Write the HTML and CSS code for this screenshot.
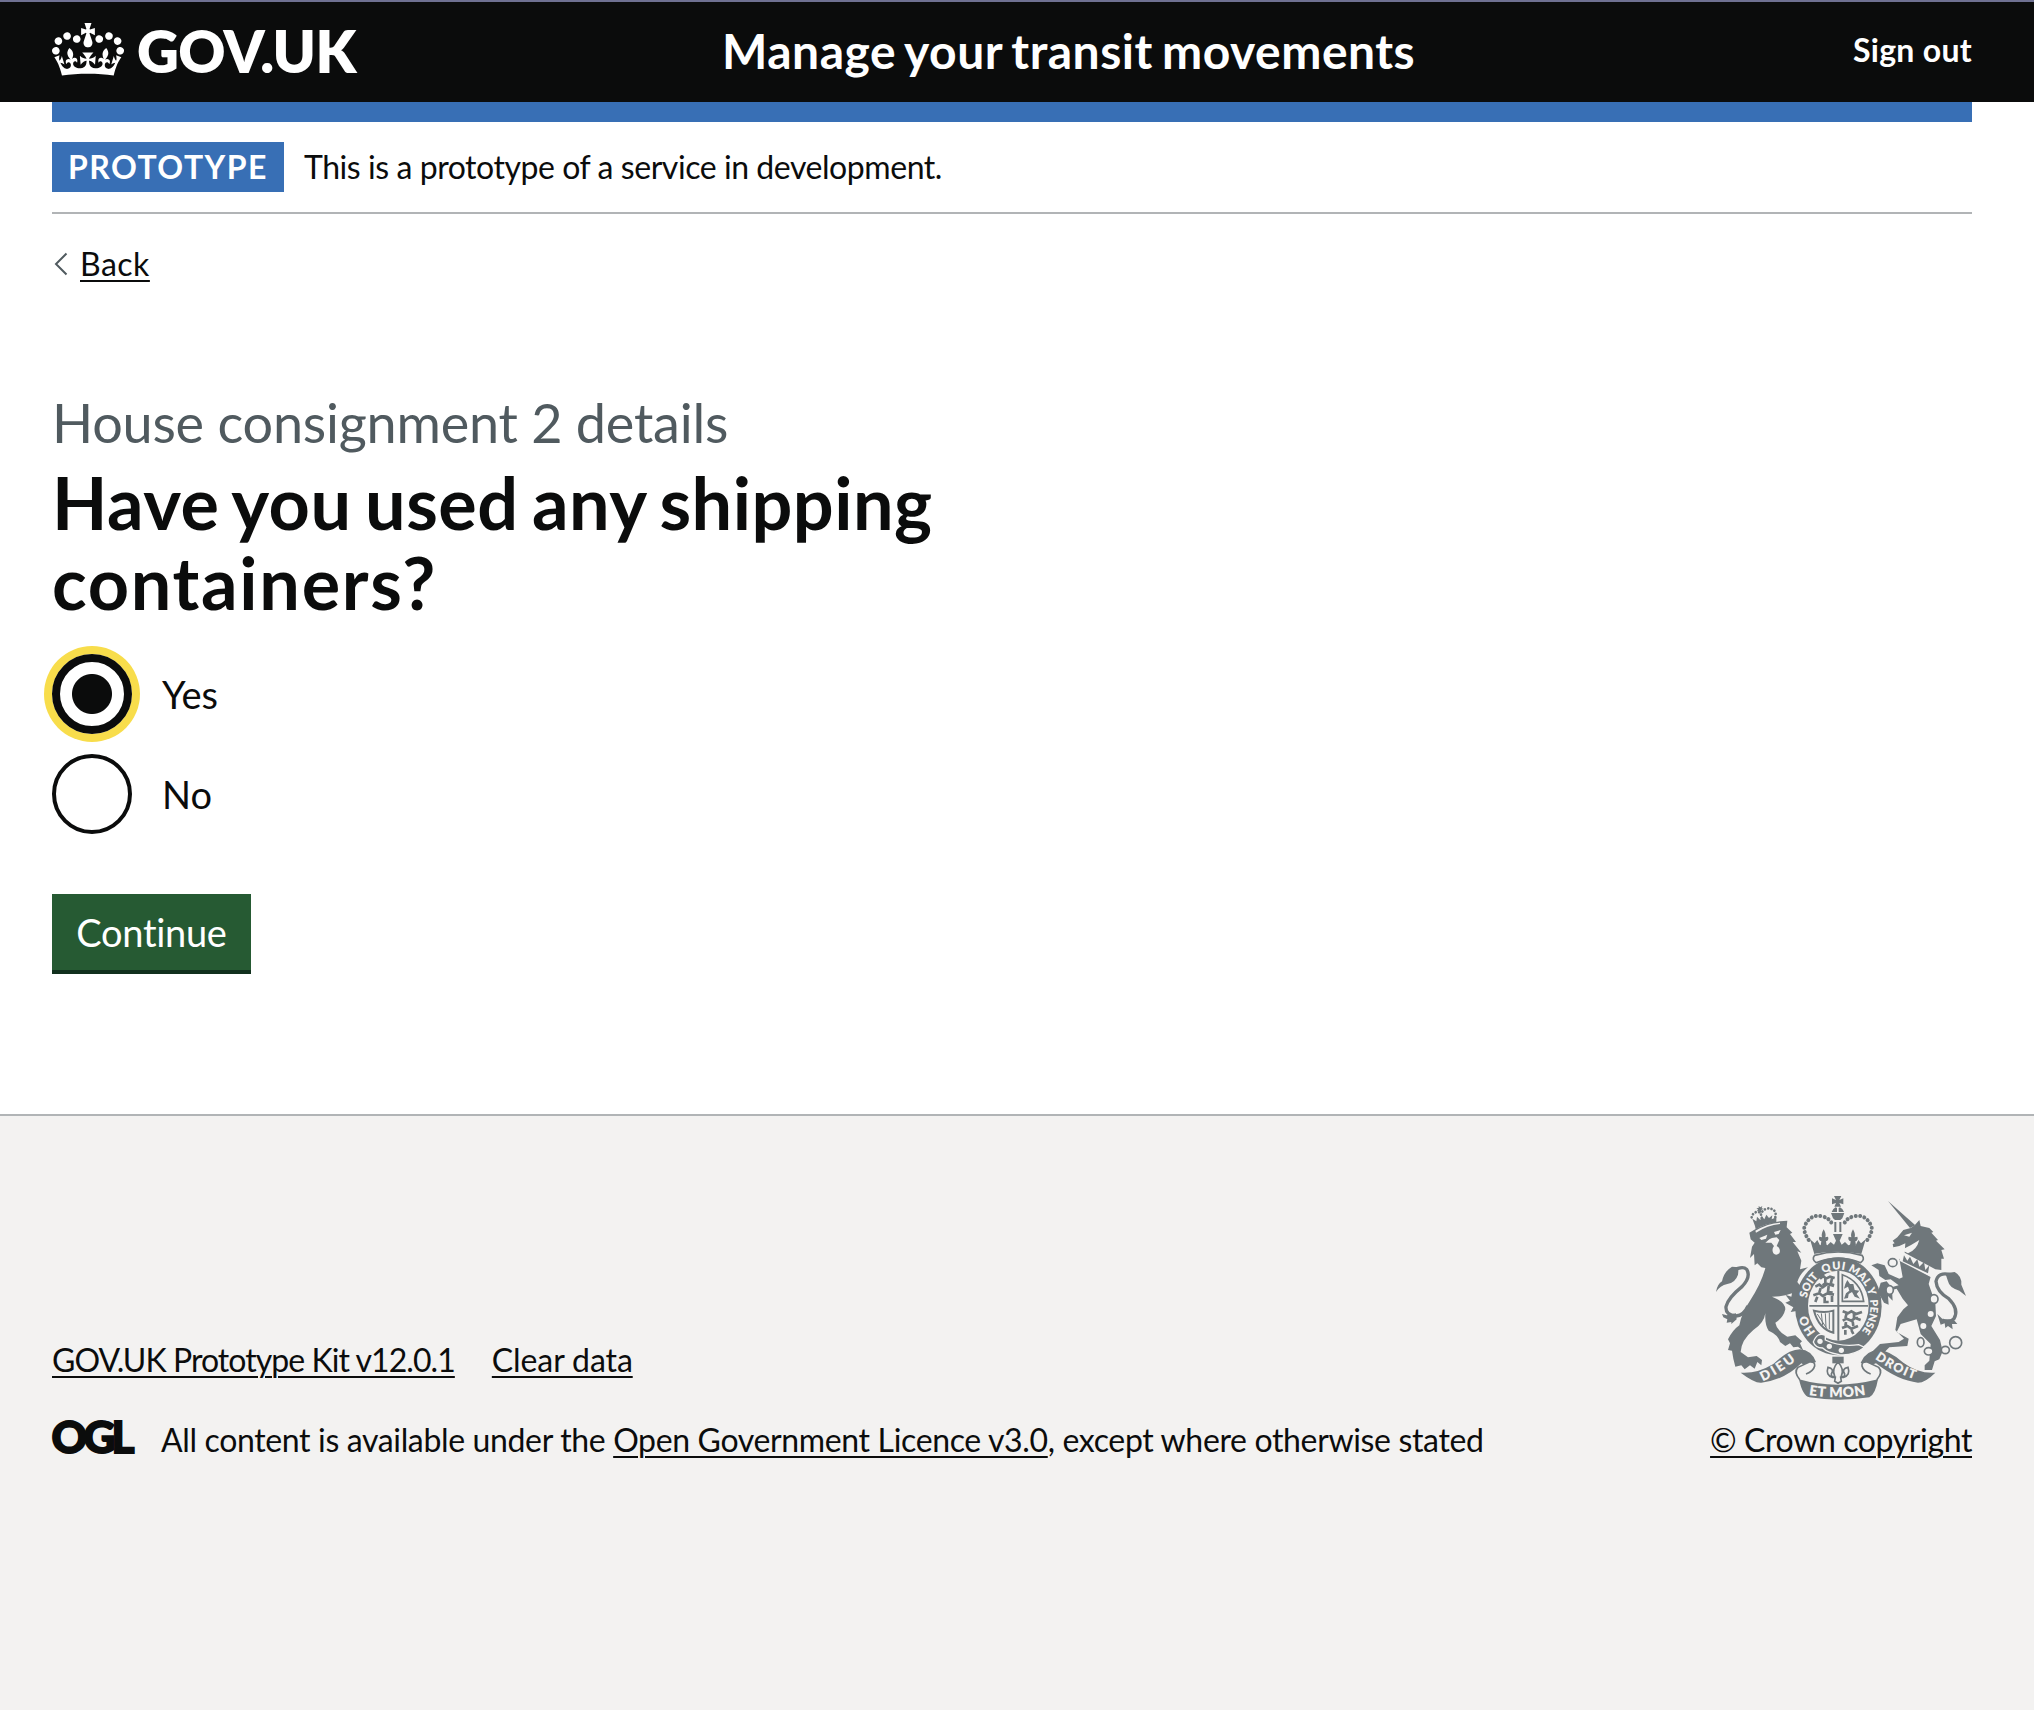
FILE: index.html
```html
<!DOCTYPE html>
<html lang="en">
<head>
<meta charset="utf-8">
<title>Have you used any shipping containers?</title>
<link rel="stylesheet" href="styles.css">
</head>
<body>
<header class="header">
  <div class="header-inner">
    <a class="logo" href="#">
      <svg class="crown" viewBox="0 0 132 97" preserveAspectRatio="none" aria-hidden="true"><path fill="#fff" fill-rule="evenodd" d="M25 30.2c3.5 1.5 7.7-.2 9.1-3.7 1.5-3.6-.2-7.8-3.9-9.2-3.6-1.4-7.6.3-9.1 3.9-1.4 3.5.3 7.5 3.9 9zM9 39.5c3.6 1.5 7.8-.2 9.2-3.7 1.5-3.6-.2-7.8-3.9-9.1-3.6-1.5-7.6.2-9.1 3.8-1.4 3.5.3 7.5 3.8 9zM4.4 57.2c3.5 1.5 7.7-.2 9.1-3.8 1.5-3.6-.2-7.7-3.9-9.1-3.5-1.5-7.6.3-9.1 3.8-1.4 3.5.3 7.6 3.9 9.1zm38.3-21.4c3.5 1.5 7.7-.2 9.1-3.8 1.5-3.6-.2-7.7-3.9-9.1-3.6-1.5-7.6.3-9.1 3.8-1.3 3.6.4 7.7 3.9 9.1zm64.4-5.6c-3.6 1.5-7.8-.2-9.1-3.7-1.5-3.6.2-7.8 3.8-9.2 3.6-1.4 7.7.3 9.2 3.9 1.3 3.5-.4 7.5-3.9 9zm15.9 9.3c-3.6 1.5-7.7-.2-9.1-3.7-1.5-3.6.2-7.8 3.7-9.1 3.6-1.5 7.7.2 9.2 3.8 1.5 3.5-.3 7.5-3.8 9zm4.7 17.7c-3.6 1.5-7.8-.2-9.2-3.8-1.5-3.6.2-7.7 3.9-9.1 3.6-1.5 7.7.3 9.2 3.8 1.3 3.5-.4 7.6-3.9 9.1zM89.3 35.8c-3.6 1.5-7.8-.2-9.2-3.8-1.4-3.6.2-7.7 3.9-9.1 3.6-1.5 7.7.3 9.2 3.8 1.4 3.6-.3 7.7-3.9 9.1zM69.7 17.7l8.9 4.7V9.3l-8.9 2.8c-.2-.3-.5-.6-.9-.9L72.4 0H59.6l3.5 11.2c-.3.3-.6.5-.9.9l-8.8-2.8v13.1l8.8-4.7c.3.3.6.7.9.9l-5 15.4v.1c-.2.8-.4 1.6-.4 2.4 0 4.1 3.1 7.5 7 8.1h.2c.3 0 .7.1 1 .1.4 0 .7 0 1-.1h.2c4-.6 7.1-4.1 7.1-8.1 0-.8-.1-1.7-.4-2.4V34l-5.1-15.4c.4-.2.7-.6 1-.9zM66 92.8c16.9 0 32.8 1.1 47.1 3.2 4-16.9 8.9-26.7 14-33.5l-9.6-3.4c1 4.9 1.1 7.2 0 10.2-1.5-1.4-3-4.3-4.2-8.7L108.6 76c2.8-2 5-3.2 7.5-3.3-4.4 9.4-10 11.9-13.6 11.2-4.3-.8-6.3-4.6-5.6-7.9 1-4.7 5.7-5.9 8-.5 4.3-8.7-3-11.4-7.6-8.8 7.1-7.2 7.9-13.5 2.1-21.1-8 6.1-8.1 12.3-4.5 20.8-4.7-5.4-12.1-2.5-9.5 6.2 3.4-5.2 7.9-2 7.2 3.1-.6 4.3-6.4 7.8-13.5 7.2-10.3-.9-10.9-8-11.2-13.8 2.5-.5 7.1 1.8 11 7.3L80.2 60c-4.1 4.4-8 5.3-12.3 5.4 1.4-4.4 8-11.6 8-11.6H55.5s6.4 7.2 7.9 11.6c-4.2-.1-8-1-12.3-5.4l1.4 16.4c3.9-5.5 8.5-7.7 10.9-7.3-.3 5.8-.9 12.8-11.1 13.8-7.2.6-12.9-2.9-13.5-7.2-.7-5 3.8-8.3 7.1-3.1 2.7-8.7-4.6-11.6-9.4-6.2 3.7-8.5 3.6-14.7-4.6-20.8-5.8 7.6-5 13.9 2.2 21.1-4.7-2.6-11.9.1-7.7 8.8 2.3-5.5 7.1-4.2 8.1.5.7 3.3-1.3 7.1-5.7 7.9-3.5.7-9-1.8-13.5-11.2 2.5.1 4.7 1.3 7.5 3.3l-4.7-15.4c-1.2 4.4-2.7 7.2-4.3 8.7-1.1-3-.9-5.3 0-10.2l-9.5 3.4c5 6.9 9.9 16.7 14 33.5 14.8-2.1 30.8-3.2 47.7-3.2z"/></svg>
      <span class="logotype">GOV.UK</span>
    </a>
    <a class="service-name" href="#">Manage your transit movements</a>
    <a class="sign-out" href="#">Sign out</a>
  </div>
</header>
<div class="container">
  <div class="bar"></div>
  <div class="phase-banner">
    <strong class="tag">PROTOTYPE</strong>
    <span class="phase-text">This is a prototype of a service in development.</span>
  </div>
  <a class="back" href="#">
    <svg class="chevron" viewBox="0 0 14 24" aria-hidden="true"><path d="M12.5 1.500 2 12l10.500 10.500" fill="none" stroke="#505a5f" stroke-width="2"/></svg>
    <span class="link">Back</span>
  </a>
  <main class="main">
    <span class="caption">House consignment 2 details</span>
    <h1 class="heading">Have you used any shipping<br><span class="heading-end">containers?</span></h1>
    <div class="radios">
      <label class="radio"><span class="dot dot-checked"></span>Yes</label>
      <label class="radio"><span class="dot"></span>No</label>
    </div>
    <button class="button" type="button">Continue</button>
  </main>
</div>
<footer class="footer">
  <div class="footer-meta">
    <div class="footer-links"><a class="link kit" href="#">GOV.UK Prototype Kit v12.0.1</a><a class="link clear" href="#">Clear data</a></div>
    <div class="licence">
      <svg class="ogl" viewBox="0 0 82 34" role="img"><text x="-0.500" y="33" textLength="83" lengthAdjust="spacing">OGL</text></svg>
      <span class="licence-text">All content is available under the <a class="link" href="#">Open Government Licence v3.0</a>, except where otherwise stated</span>
    </div>
  </div>
  <div class="copyright">
    <svg class="crest" viewBox="48 48 750 612" aria-hidden="true">
      <defs>
        <path id="garter" d="M347 456A96 110 0 0 1 415 268A96 110 0 0 1 455.600 477.700"/>
        <path id="ribbon-left" d="M188 604Q245 578 294 536"/>
        <path id="ribbon-mid" d="M326 645Q414 660 504 643"/>
        <path id="ribbon-right" d="M524 536Q585 580 655 602"/>
      </defs>
      <g class="ink">
        <!-- lion -->
        <path d="M155 112q2-12 14-16 12-2 14 8 2-12 16-18 14-4 26 8 4 8 0 20M183 104l2 10" fill="none" stroke="#6f777b" stroke-width="8" stroke-linecap="round" stroke-dasharray="0.100 10"/>
        <path d="M176 78l5 4 6-4-2 7 6 1-7 4 0 12-6-10-7 2 3-6-5-4 7 0zM165 138l-8-22 12 8 2-14 10 10 4-12 8 10 6-14 8 10 10-8-2 12 14-6 0 16q-34 2-62 20z"/>
        <path d="M148 158Q190 130 240 124L262 122L260 142L277 158L270 162L288 186L278 186L304 218L292 214L304 242L300 268L324 262Q300 280 292 306L310 330Q326 360 325 398L318 406L308 396L300 406L294 392L272 396L280 382L256 368L270 362L256 344L274 350L276 340Q250 350 216 350Q256 366 256 388Q250 414 226 428Q230 452 262 470L286 466L306 484L300 490L310 512L294 500L280 502L270 490L256 498L240 486Q234 464 206 452Q194 434 196 400Q192 430 160 450Q124 480 122 516L144 532L170 528L186 540L184 556L172 546L164 566L150 556L134 568L124 556L106 560L100 536L96 512L84 510L90 490L84 478Q98 450 118 436Q124 400 150 362Q184 310 196 264L184 262L172 250L164 256L162 222L150 234L156 200L164 188L152 178Z"/>
        <path d="M98 272q30-16 42-4 14 22-14 52-42 34-48 60-2 26 30 28 24-2 36-30" fill="none" stroke="#6f777b" stroke-width="10"/>
        <path d="M48 336q4-24 18-32 6-30 30-44l20 2-2 22q-8 24-32 28-22 4-34 24zM66 402l14 4 28-6 2 18-16 14 0-6-14 2 2-10-12-6z"/>
        <!-- unicorn -->
        <path d="M564 63L646 136L630 144Z"/>
        <path d="M578 182l14-10 18-22 22-6 12-8 14-16 4 18 26 6 12 12-6 2 20 22-6 2 26 26-10 2 8 26-8 0 0 34-18-2-92-50 2-28-18 8-18 4-2-10 6-2z"/>
        <path d="M598 236l94 54-6 22 20 56 2 40-14 30 26 42 8 34-10 24-14 6-8 26-22 0 0-14 14-14 4-50-30-30-12-44-48 14-12 24 36 20-4 22-54 4-22 22-32 6 4-16 22-22 56-6 16-10-26-26 6-38 18-24 14-12-16-20-18-30-14 4 2 32-14-14 2 26-14-6-18-32 8-28 18-4 14 18 22-6-24-18-16 2-18-12-2-18-22-14 18-6 22 6 12 26 32 14 10-4z"/>
        <path d="M752 284q-38-10-44 20 2 30 38 52 32 32 16 60-16 16-36 4" fill="none" stroke="#6f777b" stroke-width="10"/>
        <path d="M736 280l28-4q22 12 20 38l14 34-20-16q-30-8-34-28zM712 402l16 16 32 0 12 14-16 0 2 16-14-10-8 6-2-14-12 4z"/>
        <g fill="#f3f2f1" stroke="#6f777b" stroke-width="5"><ellipse cx="578" cy="248" rx="13" ry="12"/><ellipse cx="569" cy="330" rx="11" ry="13"/><ellipse cx="702" cy="357" rx="12" ry="13"/><ellipse cx="662" cy="487" rx="10" ry="14"/><ellipse cx="686" cy="514" rx="13" ry="11"/><ellipse cx="736" cy="510" rx="12" ry="11"/><circle cx="767" cy="488" r="18"/></g>
        <!-- crown -->
        <path d="M402 48h22l-6 12 12-5v18l-12-4 5 11h-20l5-11-12 4v-18l12 5zM411 84v12h-16q4-10 12-14zM416 84v12h16q-4-10-12-14zM393 99h40l-6 16-6 5h-16l-6-5z"/>
        <path d="M343 222l-13-44 14 12 8-10 8 16 11-4 11 4 10-10 10 8 6-12-9-20h29l-9 20 6 12 10-8 10 10 11-4 11 4 8-16 8 10 14-12-13 44q-72-14-144 0z"/>
        <path d="M371 148q8 14 5 24l8-2q4 10-6 14l2 12h-18l2-12q-10-4-6-14l8 2q-3-10 5-24zM459 148q8 14 5 24l8-2q4 10-6 14l2 12h-18l2-12q-10-4-6-14l8 2q-3-10 5-24zM403 126h6v30h-6zM418 126h6v30h-6z"/>
        <path d="M326 180q-20-30-10-46 16-30 44-26 26 4 34 20M502 180q20-30 10-46-16-30-44-26-26 4-34 20" fill="none" stroke="#6f777b" stroke-width="12" stroke-linecap="round" stroke-dasharray="0.100 13"/>
        <path d="M344 226q70-20 142 0 10 12-4 22-66-26-134 0-14-10-4-22z" fill="#f3f2f1" stroke="#6f777b" stroke-width="5"/>
        <!-- garter and shield -->
        <ellipse cx="415" cy="379" rx="130" ry="147"/>
        <ellipse cx="415" cy="377" rx="91" ry="105" fill="#f3f2f1"/>
        <path d="M412 272h6v210h-6zM328 375h176v5H328z"/>
        <g fill="none" stroke="#6f777b" stroke-width="8"><path d="M360 296l10-8 8 8 12-6 14 4M376 296v14l-8 6M396 296l-4 16 10 4M346 320l12-6 10 8 14-10 20 6M362 324l-4 14M386 318l-2 18 14 2M340 346l18-6 10 8 14-8 20 4M352 350l-6 16M374 350v16h12M396 348v18M428 394l16 6 10-6 14 8 18-6M440 400l-4 14M462 400v14h12M428 422l12-6 14 6 12-8 16 6M438 426l-2 12M458 424l2 14M426 444l16-6 12 8 20-8M436 450v14M454 450l6 12"/></g>
        <path d="M427 284q56 20 64 80h-64z" fill="none" stroke="#6f777b" stroke-width="5"/>
        <path d="M442 300l8 12 10 0 4 18 14 2-8 10 10 14-16-6-8-14-10 6-2 12-12 2 6-16 10-8-4-12-12 6 4-14z"/>
        <path d="M342 392q32 8 58 0v66q-44-12-58-66z" fill="none" stroke="#6f777b" stroke-width="6"/>
        <path d="M352 402l30 46M364 400l4 36M376 400l2 42M388 398v50" fill="none" stroke="#6f777b" stroke-width="3"/>
        <path d="M340 486q12-32 36-20l0 14q46 22 100 14l18 8q-34 26-76 22-36-6-50-20-22 0-28-18z" stroke="#f3f2f1" stroke-width="4"/>
        <g fill="#f3f2f1"><circle cx="360" cy="484" r="8"/><circle cx="388" cy="499" r="8"/><circle cx="424" cy="511" r="8"/><circle cx="692" cy="402" r="9"/><circle cx="670" cy="438" r="9"/></g>
        <!-- ribbons -->
        <path d="M122 578q48 4 98-26 46-44 80-44 34 2 48 38l-30 12-14-8q-50 50-120 58-20 2-62-30zM706 578q-50 4-96-30-40-36-74-38-40 2-54 38l24 10 22-8q66 52 126 58 22 0 52-30zM297 598q110 32 237 0-8 46-26 54-90 14-180 0-20-4-31-54z"/>
        <path d="M300 600q-20-24-6-38l34-16q18-2 16 12-4 16-26 24M530 600q20-24 6-38l-34-16q-18-2-16 12 4 16 26 24" fill="#f3f2f1" stroke="#6f777b" stroke-width="5"/>
        <path d="M397 530h34v20h-34z"/>
        <path d="M414 546q20 22 10 42 10 6 10-6-10-16 10-20 8 24-14 30h-8l2 12-10 6-10-6 2-12h-8q-22-6-14-30 20 4 10 20 0 12 10 6-10-20 10-42z" fill="#f3f2f1" stroke="#6f777b" stroke-width="5"/>
      </g>
      <!-- face and collar details -->
      <g fill="#f3f2f1">
        <path d="M166 152q38-22 74-24l0 4q-38 4-72 26zM178 174l24-10-4 12-14 4zM222 156l20-6-6 12-10 2zM196 188l12-10 8-4 14-2 8 8-8 18q14 8 8 22-10 8-18 0-6-12 2-22l-8-10z"/>
        <path d="M612 166l24-8-8 12zM604 210q30-14 54-30-8 30-34 40z"/>
        <path d="M606 220l98 50-10 22-96-50z"/>
      </g>
      <path class="ink" d="M608 244l4-18 10 16 8-12 10 22 12-14 6 22 14-14 4 24 12-14-4 24z"/>
      <g class="motto">
        <text font-size="36"><textPath href="#garter" startOffset="0" textLength="58">HO</textPath></text>
        <text font-size="33"><textPath href="#garter" startOffset="108" textLength="74">SOIT</textPath></text>
        <text font-size="33"><textPath href="#garter" startOffset="200" textLength="66">QUI</textPath></text>
        <text font-size="33"><textPath href="#garter" startOffset="276" textLength="72">MAL</textPath></text>
        <text font-size="33"><textPath href="#garter" startOffset="356" textLength="20">Y</textPath></text>
        <text font-size="32"><textPath href="#garter" startOffset="390" textLength="100">PENSE</textPath></text>
        <text font-size="40"><textPath href="#ribbon-left" textLength="118">DIEU</textPath></text>
        <text font-size="42"><textPath href="#ribbon-mid" textLength="172">ET MON</textPath></text>
        <text font-size="38"><textPath href="#ribbon-right" textLength="134">DROIT</textPath></text>
      </g>
    </svg>
    <a class="link owner" href="#">© Crown copyright</a>
  </div>
</footer>
</body>
</html>
```
FILE: styles.css
```css
* { box-sizing: border-box; }
body {
  margin: 0;
  background: #fff;
  color: #0b0c0c;
  font-family: Lato, "Liberation Sans", sans-serif;
  font-size: 32px;
  line-height: 40px;
}
a { color: inherit; text-decoration: none; }
.link {
  text-decoration: underline;
  text-decoration-thickness: 2px;
  text-underline-offset: 4px;
}
.header {
  height: 102px;
  border-top: 2px solid #6f7192;
  background: #0b0c0c;
  color: #fff;
}
.header-inner {
  display: grid;
  grid-template-columns: 670px 1fr auto;
  align-items: start;
  margin: 0 62px 0 52px;
  font-weight: 700;
}
.logo { display: flex; padding-top: 21px; }
.crown { width: 72px; height: 53px; }
.logotype {
  margin: -2px 0 0 13px;
  font-size: 58px;
  font-weight: 800;
  line-height: 60px;
  letter-spacing: -0.6px;
}
.service-name {
  padding-top: 19px;
  font-size: 48px;
  line-height: 60px;
  letter-spacing: 0.5px;
  word-spacing: -3px;
  white-space: nowrap;
}
.sign-out { padding-top: 28px; letter-spacing: 0.3px; }
.container { margin: 0 62px 0 52px; }
.bar { height: 20px; background: #386fb5; }
.phase-banner {
  display: flex;
  gap: 20px;
  padding: 20px 0;
  border-bottom: 2px solid #b1b4b6;
  line-height: 50px;
}
.tag {
  width: 232px;
  padding-left: 16px;
  background: #386fb5;
  color: #fff;
  letter-spacing: 1.45px;
}
.phase-text { letter-spacing: -0.44px; }
.back { display: flex; width: max-content; margin-top: 30px; letter-spacing: 0.5px; }
.chevron { width: 14px; height: 24px; margin: 8px 12px 0 2px; }
.main { display: flex; flex-direction: column; align-items: flex-start; padding-top: 109px; }
.caption { color: #505a5f; font-size: 54px; line-height: 60px; letter-spacing: -0.23px; }
.heading {
  margin: 9px 0 32px;
  font-size: 72px;
  line-height: 80px;
  letter-spacing: 0.5px;
  word-spacing: -4.5px;
  white-space: nowrap;
}
.heading-end { letter-spacing: 1.7px; }
.radios { display: grid; gap: 20px; font-size: 38px; line-height: 80px; }
.radio { display: flex; gap: 30px; }
.dot {
  width: 80px;
  height: 80px;
  border: 4px solid #0b0c0c;
  border-radius: 50%;
}
.dot-checked {
  border-width: 8px;
  background: radial-gradient(circle, #0b0c0c 19.5px, #fff 20.5px);
  box-shadow: 0 0 0 8px #f8dd4b;
}
.button {
  width: 199px;
  height: 80px;
  margin: 60px 0 140px;
  padding: 0;
  border: 0;
  border-bottom: 4px solid #11301d;
  background: #265a33;
  color: #fff;
  font: inherit;
  font-size: 38px;
  line-height: 76px;
  letter-spacing: -0.3px;
}
.footer {
  display: flex;
  justify-content: space-between;
  align-items: flex-start;
  height: 596px;
  padding: 80px 62px 0 52px;
  border-top: 2px solid #b1b4b6;
  background: #f3f2f1;
}
.footer-links { display: flex; gap: 37px; padding-top: 144px; }
.kit { letter-spacing: -0.94px; }
.clear { letter-spacing: -0.1px; }
.licence { display: flex; gap: 27px; padding-top: 40px; }
.licence-text { letter-spacing: -0.35px; white-space: nowrap; }
.ogl { width: 82px; height: 34px; overflow: visible; }
.ogl text {
  fill: #0b0c0c;
  stroke: #0b0c0c;
  stroke-width: 1.8px;
  font: 900 44px Lato, sans-serif;
}
.copyright { display: flex; flex-direction: column; align-items: flex-end; }
.crest { width: 250px; height: 204px; margin: 0 6px 20px 0; overflow: visible; }
.owner { letter-spacing: -0.38px; }
.ink { fill: #6f777b; }
.motto { fill: #f3f2f1; font-family: Lato, sans-serif; font-weight: 800; }
```
